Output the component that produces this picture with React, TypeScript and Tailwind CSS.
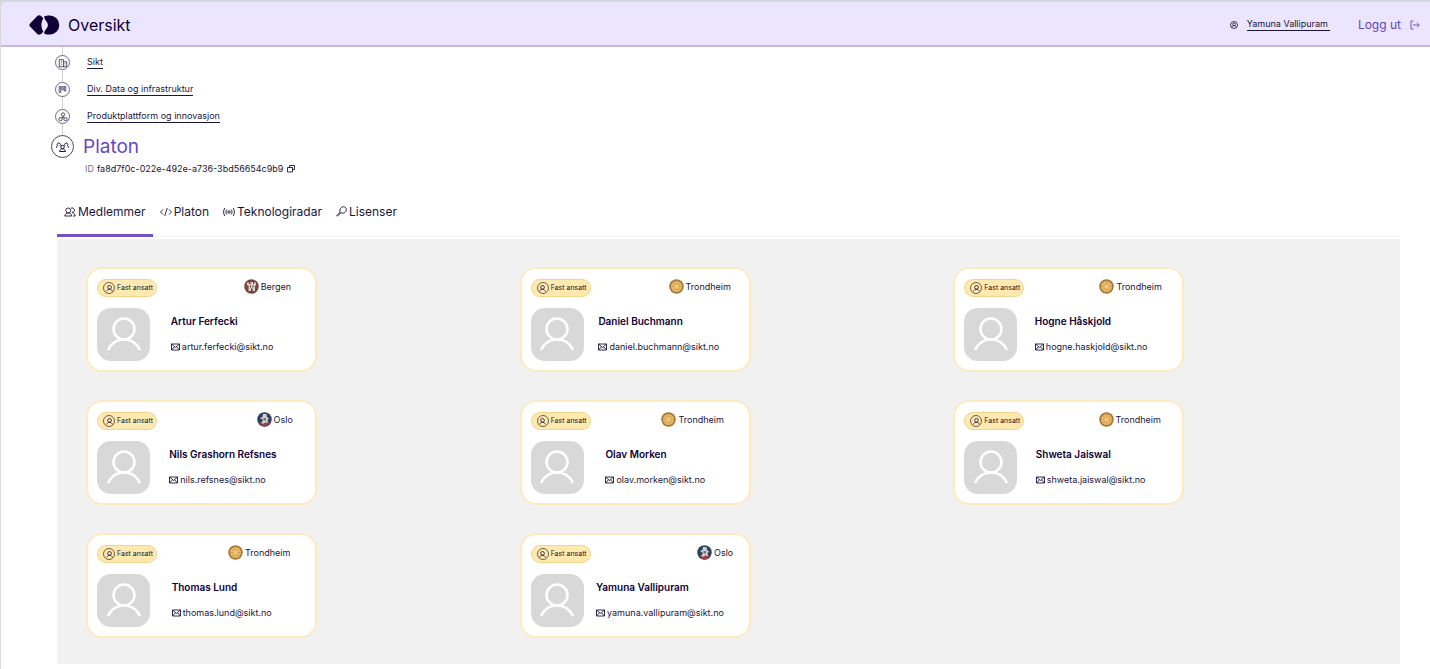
import React from 'react';

type City = 'Bergen' | 'Trondheim' | 'Oslo';

interface Member {
  name: string;
  email: string;
  city: City;
}

const members: Member[] = [
  { name: 'Artur Ferfecki', email: 'artur.ferfecki@sikt.no', city: 'Bergen' },
  { name: 'Daniel Buchmann', email: 'daniel.buchmann@sikt.no', city: 'Trondheim' },
  { name: 'Hogne Håskjold', email: 'hogne.haskjold@sikt.no', city: 'Trondheim' },
  { name: 'Nils Grashorn Refsnes', email: 'nils.refsnes@sikt.no', city: 'Oslo' },
  { name: 'Olav Morken', email: 'olav.morken@sikt.no', city: 'Trondheim' },
  { name: 'Shweta Jaiswal', email: 'shweta.jaiswal@sikt.no', city: 'Trondheim' },
  { name: 'Thomas Lund', email: 'thomas.lund@sikt.no', city: 'Trondheim' },
  { name: 'Yamuna Vallipuram', email: 'yamuna.vallipuram@sikt.no', city: 'Oslo' },
];

interface IconProps {
  className?: string;
  strokeWidth?: number;
  viewBox?: string;
  children: React.ReactNode;
}

const Icon: React.FC<IconProps> = ({ className, strokeWidth = 1.8, viewBox = '0 0 24 24', children }) => (
  <svg
    className={`shrink-0 ${className ?? ''}`}
    viewBox={viewBox}
    fill="none"
    stroke="currentColor"
    strokeWidth={strokeWidth}
    aria-hidden="true"
  >
    {children}
  </svg>
);

const Logo = () => (
  <svg className="h-[20px] w-[31px]" viewBox="0 0 30 20" fill="#0f0035" aria-hidden="true">
    <path d="M7.5 1.2.8 8.2a2.5 2.5 0 0 0 0 3.6l6.7 7c1.8 1.6 4 1 6.3-2.3C11.300 13 11.300 7 13.800 3.500 11.500.2 9.300-.4 7.500 1.200Z" />
    <path d="M14.600 1.600C16 .7 18 .5 20.300.5a9.500 9.500 0 0 1 0 19c-2.300 0-4.300-.2-5.700-1.100 0-3 3.800-5.200 3.800-8.400s-3.800-5.400-3.800-8.400Z" />
  </svg>
);

const cityIcons: Record<City, React.ReactNode> = {
  Bergen: (
    <svg className="size-[15px]" viewBox="0 0 30 30" aria-hidden="true">
      <circle cx="15" cy="15" r="14.5" fill="#7d4540" />
      <path d="M6 7h4v3h3V6h5v4h2V7h4v6h-2v11H9V13H6Z" fill="#d9cfcb" />
      <path d="M12 13h2v4h-2zM17 13h2v4h-2zM14 19h3v5h-3z" fill="#5f3532" />
    </svg>
  ),
  Trondheim: (
    <svg className="size-[15px]" viewBox="0 0 30 30" aria-hidden="true">
      <circle cx="15" cy="15" r="14.5" fill="#a8773a" />
      <circle cx="15" cy="15" r="11" fill="#e5b968" />
      <path d="M15 5v20M5 15h20M8 8l14 14M22 8 8 22" stroke="#c8974c" strokeWidth="1.5" />
      <circle cx="15" cy="15" r="4" fill="#efc97a" />
    </svg>
  ),
  Oslo: (
    <svg className="size-[15px]" viewBox="0 0 30 30" aria-hidden="true">
      <circle cx="15" cy="15" r="14.5" fill="#2c4361" />
      <path d="M5 21c4-3 16-3 20 0-2 5-6 8-10 8S7 26 5 21Z" fill="#9c3f3c" />
      <path d="M12 4h7l1 6 4 3-3 3 1 6-5-1-6 3-2-3 3-5-6-4 5-2Z" fill="#cdd1d0" />
      <path d="M13 12h5v5h-5z" fill="#77706c" />
    </svg>
  ),
};

const PersonIcon = ({ className, strokeWidth }: { className: string; strokeWidth?: number }) => (
  <Icon className={className} strokeWidth={strokeWidth}>
    <circle cx="12" cy="9" r="5" />
    <path d="M4.5 19.5C6 15.800 8.700 14 12 14s6 1.800 7.500 5.500" />
  </Icon>
);

const MailIcon = () => (
  <Icon className="h-[8px] w-[9px]" viewBox="0 0 18 16">
    <path d="M1 2h16v12H1ZM1 2l8 7 8-7M1 14l6-6.500M17 14l-6-6.500" />
  </Icon>
);

const MemberCard: React.FC<{ member: Member }> = ({ member }) => (
  <li className="w-[231px] rounded-[16px] border-2 border-[#fdeabf] bg-white pt-[10px] pb-[9px] pl-[9px]">
    <div className="grid grid-cols-[53px_minmax(0,1fr)_auto_minmax(0,1fr)_minmax(0,1fr)]">
      <span className="col-span-2 flex h-[18px] w-[60px] items-center gap-[2px] rounded-full border border-[#f0d58c] bg-[#ffe9ae] pl-[5px] text-[7px] whitespace-nowrap">
        <span className="flex size-[12px] shrink-0 items-center justify-center rounded-full border border-[#6b5f55]">
          <PersonIcon className="size-[9px]" strokeWidth={2.2} />
        </span>
        Fast ansatt
      </span>
      <span className="col-span-2 mr-[3px] flex h-[15px] items-center gap-[2px] justify-self-end text-[9px]">
        {cityIcons[member.city]}
        {member.city}
      </span>
      <span className="col-start-1 mt-[11px] flex size-[53px] items-center justify-center rounded-[14px] bg-[#d8d8d8] text-white">
        <Icon className="size-[40px]" viewBox="0 0 40 40" strokeWidth={2.5}>
          <circle cx="20" cy="14" r="10.500" />
          <path d="M4 35c3-6.500 9-10.500 16-10.500s13 4 16 10.500" />
        </Icon>
      </span>
      <div className="col-start-3 mt-[16px] whitespace-nowrap">
        <h3 className="text-[10px] leading-[16px] font-semibold text-[#0f0035]">{member.name}</h3>
        <a
          href={`mailto:${member.email}`}
          className="mt-[11px] flex items-center gap-[2px] text-[9px] leading-[14px]"
        >
          <MailIcon />
          {member.email}
        </a>
      </div>
    </div>
  </li>
);

const parents = [
  {
    name: 'Sikt',
    icon: (
      <Icon className="size-[10px]">
        <path d="M3 21V4h10v17M13 9h8v12H2M7 8h2M7 12h2M7 16h2M16 13h2M16 17h2" />
      </Icon>
    ),
  },
  {
    name: 'Div. Data og infrastruktur',
    icon: (
      <Icon className="size-[9px]">
        <path d="M3 4h4v16H3ZM10 4h4v9h-4ZM17 4h4v12h-4Z" />
      </Icon>
    ),
  },
  {
    name: 'Produktplattform og innovasjon',
    icon: (
      <Icon className="size-[10px]">
        <circle cx="12" cy="6" r="4" />
        <circle cx="6" cy="17" r="4" />
        <circle cx="18" cy="17" r="4" />
        <path d="M12 10v3l-3 2M12 13l3 2" />
      </Icon>
    ),
  },
];

const tabs = [
  {
    name: 'Medlemmer',
    icon: (
      <Icon className="h-[10px] w-[12px]" viewBox="0 0 24 20">
        <circle cx="8.5" cy="7" r="5" />
        <path d="M1.5 18c1-4 3.500-6 7-6s6 2 7 6ZM14 2.500a4.600 4.600 0 1 1 2 8.500c3.500 0 5.500 3 6.500 7H18" />
      </Icon>
    ),
  },
  {
    name: 'Platon',
    icon: (
      <Icon className="h-[10px] w-[12px]" viewBox="0 0 24 20">
        <path d="M6 5 1 10l5 5M18 5l5 5-5 5M14.500 2l-5 16" />
      </Icon>
    ),
  },
  {
    name: 'Teknologiradar',
    icon: (
      <Icon className="h-[10px] w-[12px]" viewBox="0 0 24 20">
        <circle cx="12" cy="10" r="2.5" />
        <path d="M7.500 5c-2 3-2 7 0 10M16.500 5c2 3 2 7 0 10M3.500 2c-3 5-3 11 0 16M20.500 2c3 5 3 11 0 16" />
      </Icon>
    ),
  },
  {
    name: 'Lisenser',
    icon: (
      <Icon className="size-[11px]" viewBox="0 0 22 22">
        <path d="M9 14 3 20.500 1.500 19 8 12.500M8 12.500C6.500 6 10 1.500 15 1.500c3.500 0 5.500 2.500 5.500 6 0 5-4.500 8-11.500 6.500Z" />
      </Icon>
    ),
  },
];

const App = () => {
  return (
    <div className="min-h-screen border-l border-[#d9d9dc] bg-white font-['Inter','Liberation_Sans',sans-serif] text-[#1c1538]">
      <div className="bg-[#cdd8e2] pt-[2px]">
        <header className="flex h-[45px] items-center justify-between rounded-tl-[4px] border-b-2 border-[#c6b8dd] bg-[#ebe5ff] pt-[2px] pr-[10px] pl-[28px]">
          <a href="#" className="flex items-center gap-[8px] text-[16px] text-[#0f0035]">
            <Logo />
            Oversikt
          </a>
          <div className="flex items-center">
            <a href="#" className="flex items-center gap-[9px] text-[9px]">
              <Icon className="size-[8px]" strokeWidth={2.4}>
                <circle cx="12" cy="12" r="10.500" />
                <circle cx="12" cy="10" r="4" />
                <path d="M5 19c2-3.500 4-5 7-5s5 1.500 7 5" />
              </Icon>
              <span className="border-b border-current pr-[2px] leading-[12px]">Yamuna Vallipuram</span>
            </a>
            <button type="button" className="ml-[28px] flex items-center gap-[9px] text-[12px] text-[#6647b8]">
              Logg ut
              <Icon className="size-[10px]" viewBox="0 0 20 20">
                <path d="M7 2H2v16h5M6 10h12M14 5.500l4.500 4.500-4.500 4.500" />
              </Icon>
            </button>
          </div>
        </header>
      </div>

      <nav aria-label="Organisasjon" className="pl-[50px]">
        <ul>
          {parents.map((parent) => (
            <li key={parent.name} className="flex h-[27px] items-stretch gap-[13px]">
              <div className="flex w-[23px] flex-col items-center">
                <span className="h-[8px] w-px bg-[#d0ced6]" />
                <span className="flex size-[15px] items-center justify-center rounded-full border border-[#6f6a80]">
                  {parent.icon}
                </span>
                <span className="w-px flex-1 bg-[#d0ced6]" />
              </div>
              <a href="#" className="mt-[9px] self-start border-b border-current text-[9px] leading-[12px]">
                {parent.name}
              </a>
            </li>
          ))}
        </ul>
        <div className="flex gap-[9px]">
          <div className="flex w-[23px] flex-col items-center">
            <span className="h-[7px] w-px bg-[#d0ced6]" />
            <span className="flex size-[23px] items-center justify-center rounded-full border border-[#4c4566]">
              <Icon className="h-[10px] w-[13px]" viewBox="0 0 26 20" strokeWidth={2}>
                <circle cx="13" cy="10" r="3.5" />
                <path d="M7 19c1-3.500 3-5.500 6-5.500s5 2 6 5.500ZM8 7.500a3.300 3.300 0 1 0-5 0C1.500 8.500 1 10 1 11.500M18 7.500a3.300 3.300 0 1 1 5 0c1.500 1 2 2.500 2 4" />
              </Icon>
            </span>
          </div>
          <h1 className="mt-[6px] text-[19px] leading-[26px] text-[#6647c8]">Platon</h1>
        </div>
      </nav>

      <div className="mt-[2px] flex items-center gap-[3px] pl-[84px] text-[9px] leading-[14px]">
        <span className="text-[#77738a]">ID</span>
        <span>fa8d7f0c-022e-492e-a736-3bd56654c9b9</span>
        <button type="button" aria-label="Kopier ID" className="ml-px">
          <Icon className="size-[8px]" viewBox="0 0 16 16">
            <path d="M5 5V1h10v8h-4M1 5h10v9H1Z" />
          </Icon>
        </button>
      </div>

      <main className="mr-[30px] ml-[56px]">
        <div role="tablist" className="mt-[13px] flex h-[48px] border-b border-[#f4f3f6]">
          {tabs.map((tab, i) => (
            <button
              key={tab.name}
              type="button"
              role="tab"
              aria-selected={i === 0}
              className={`-mb-px flex items-center gap-[2px] border-b-3 px-[7px] text-[12px] ${
                i === 0 ? 'border-[#7353c4]' : 'border-transparent'
              }`}
            >
              {tab.icon}
              {tab.name}
            </button>
          ))}
        </div>
        <ul className="mt-[2px] grid grid-cols-3 gap-x-[16px] gap-y-[28px] bg-[#f1f1f1] px-[29px] pt-[28px] pb-[26px]">
          {members.map((member) => (
            <MemberCard key={member.email} member={member} />
          ))}
        </ul>
      </main>
    </div>
  );
};

export default App;
